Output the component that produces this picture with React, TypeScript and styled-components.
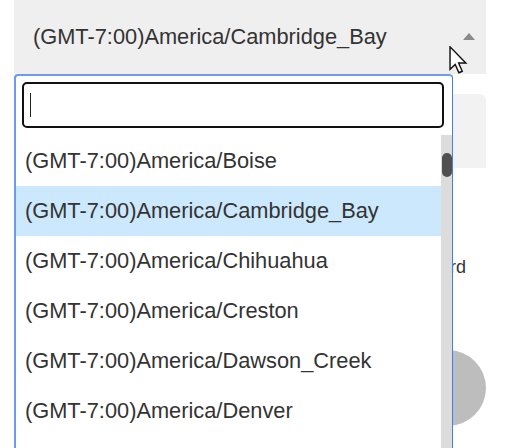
import React from "react";
import styled, { createGlobalStyle } from "styled-components";

const GlobalStyle = createGlobalStyle`
  html, body {
    margin: 0;
    padding: 0;
    background: #ffffff;
    overflow: hidden;
    width: 519px;
    height: 448px;
  }
  body {
    font-family: "Liberation Sans", Arial, sans-serif;
  }
`;

const Page = styled.div`
  position: relative;
  width: 519px;
  height: 448px;
  overflow: hidden;
`;

const Form = styled.div`
  display: flex;
  flex-direction: column;
  margin-left: 14px;
  width: 472px;
`;

const SelectBar = styled.div`
  display: flex;
  align-items: center;
  justify-content: space-between;
  height: 74px;
  box-sizing: border-box;
  padding: 0 11px 0 19px;
  background: #efefef;
  color: #333333;
  font-size: 21.8px;
`;

const Arrow = styled.span`
  width: 0;
  height: 0;
  border-left: 6px solid transparent;
  border-right: 6px solid transparent;
  border-bottom: 7px solid #8a8a8a;
  margin-top: -2px;
`;

const FieldBox = styled.div`
  margin-top: 20px;
  height: 74px;
  border-radius: 0 6px 0 0;
  background: #f2f2f2;
`;

const LabelRow = styled.div`
  display: flex;
  justify-content: flex-end;
  margin-top: 88px;
  padding-right: 20px;
  font-size: 18px;
  line-height: 22px;
  color: #333333;
`;

const CircleRow = styled.div`
  display: flex;
  justify-content: flex-end;
  margin-top: 72px;
`;

const Circle = styled.div`
  width: 76px;
  height: 76px;
  border-radius: 50%;
  background: #bdbdbd;
`;

const Dropdown = styled.div`
  position: absolute;
  left: 14px;
  top: 74px;
  width: 439px;
  height: 420px;
  box-sizing: border-box;
  background: #ffffff;
  border-top: 2px solid #6b9bf2;
  border-left: 2px solid #6b9bf2;
  border-right: 1.5px solid #3f80f0;
  border-radius: 4px 4px 0 0;
  display: flex;
  flex-direction: column;
  z-index: 2;
`;

const SearchWrap = styled.div`
  position: relative;
  margin: 6px 8px 7px 6px;
`;

const SearchInput = styled.input`
  display: block;
  width: 100%;
  height: 46px;
  box-sizing: border-box;
  border: 2px solid #111111;
  border-radius: 5px;
  outline: none;
  padding: 0 8px;
  font-family: "Liberation Sans", Arial, sans-serif;
  font-size: 21px;
  background: #ffffff;
  caret-color: transparent;
`;

const Caret = styled.span`
  position: absolute;
  left: 8px;
  top: 11px;
  width: 1px;
  height: 24px;
  background: #222222;
`;

const ListArea = styled.div`
  display: flex;
  flex: 1;
  min-height: 0;
`;

const Options = styled.ul`
  list-style: none;
  margin: 0;
  padding: 1px 0 0 0;
  flex: 1;
  min-width: 0;
`;

const Option = styled.li<{ $active?: boolean }>`
  height: 50px;
  display: flex;
  align-items: center;
  padding-left: 9px;
  font-size: 21.8px;
  color: #333333;
  white-space: nowrap;
  background: ${(p) => (p.$active ? "#cce8fc" : "transparent")};
`;

const Track = styled.div`
  width: 11px;
  background: #dcdcdc;
  display: flex;
  flex-direction: column;
  align-items: center;
`;

const Thumb = styled.div`
  margin-top: 18px;
  width: 10px;
  height: 24px;
  border-radius: 5px;
  background: #505050;
`;

const Pointer = styled.svg`
  position: absolute;
  left: 449px;
  top: 46px;
  z-index: 3;
`;

const options = [
  "(GMT-7:00)America/Boise",
  "(GMT-7:00)America/Cambridge_Bay",
  "(GMT-7:00)America/Chihuahua",
  "(GMT-7:00)America/Creston",
  "(GMT-7:00)America/Dawson_Creek",
  "(GMT-7:00)America/Denver",
];

export default function App() {
  return (
    <Page>
      <GlobalStyle />
      <Form>
        <SelectBar>
          <span>(GMT-7:00)America/Cambridge_Bay</span>
          <Arrow />
        </SelectBar>
        <FieldBox />
        <LabelRow>Remember password</LabelRow>
        <CircleRow>
          <Circle />
        </CircleRow>
      </Form>
      <Dropdown>
        <SearchWrap>
          <SearchInput type="text" aria-label="Search" />
          <Caret />
        </SearchWrap>
        <ListArea>
          <Options>
            {options.map((o) => (
              <Option key={o} $active={o.endsWith("Cambridge_Bay")}>
                {o}
              </Option>
            ))}
          </Options>
          <Track>
            <Thumb />
          </Track>
        </ListArea>
      </Dropdown>
      <Pointer width="19" height="28" viewBox="0 0 13 19.5">
        <path
          d="M0.6 0.6 L0.6 16.2 L4.2 12.8 L6.8 18.6 L9.1 17.6 L6.6 11.9 L11.6 11.9 Z"
          fill="#ffffff"
          stroke="#111111"
          strokeWidth="1"
          strokeLinejoin="miter"
        />
      </Pointer>
    </Page>
  );
}
